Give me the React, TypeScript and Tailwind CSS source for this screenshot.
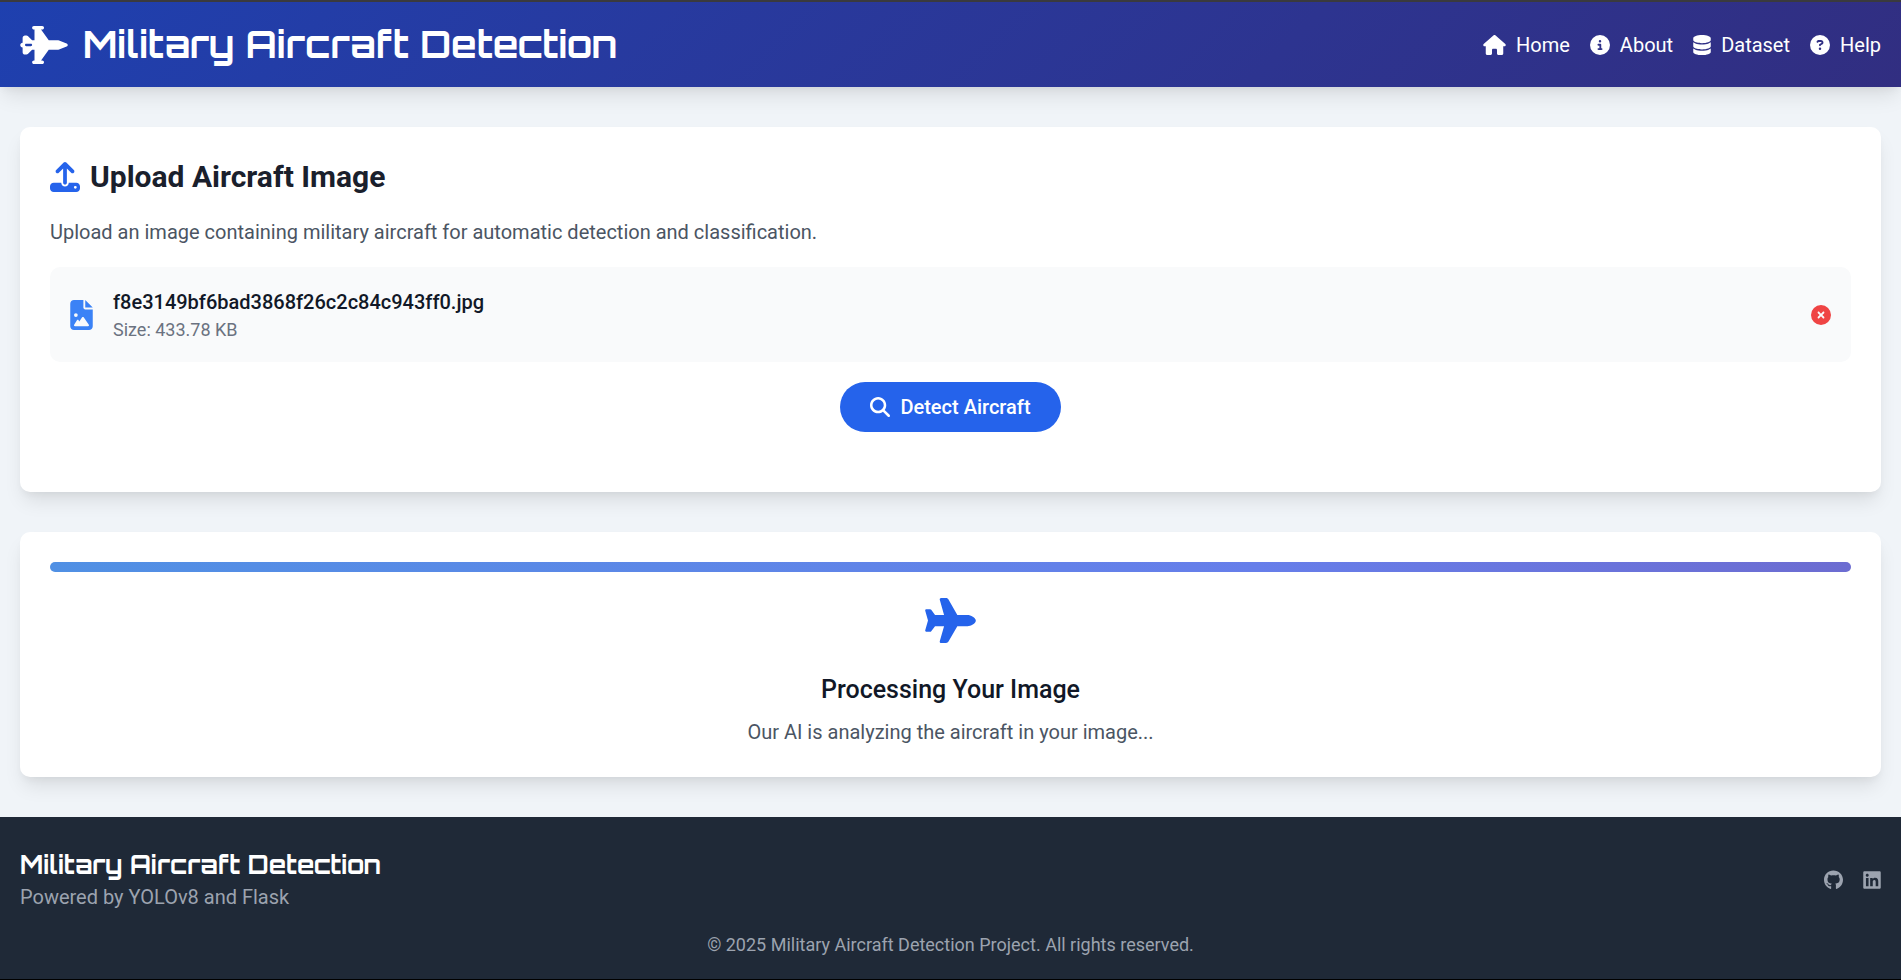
import type { ReactNode } from "react";
import {
  FaCircleInfo,
  FaCircleQuestion,
  FaCircleXmark,
  FaDatabase,
  FaFileImage,
  FaGithub,
  FaHouse,
  FaJetFighter,
  FaLinkedin,
  FaMagnifyingGlass,
  FaPlane,
  FaUpload,
} from "react-icons/fa6";

const navItems: { label: string; icon: ReactNode }[] = [
  { label: "Home", icon: <FaHouse className="h-5 w-[23px]" /> },
  { label: "About", icon: <FaCircleInfo className="size-5" /> },
  { label: "Dataset", icon: <FaDatabase className="h-5 w-[18px]" /> },
  { label: "Help", icon: <FaCircleQuestion className="size-5" /> },
];

function Header() {
  return (
    <header className="flex items-center justify-between border-t-2 border-[#3a3a3e] bg-linear-135 from-[#1e40af] to-[#312e81] px-5 py-5 text-white shadow-[0_12px_20px_-4px_rgba(0,0,0,0.1),0_5px_8px_-3px_rgba(0,0,0,0.05)]">
      <div className="flex items-center gap-[15px]">
        <FaJetFighter className="h-[38px] w-12" />
        <h1 className="font-['Orbitron','Inter',sans-serif] text-[37px] leading-[45px] font-bold">
          Military Aircraft Detection
        </h1>
      </div>
      <nav className="flex gap-5">
        {navItems.map((item) => (
          <a key={item.label} href="#" className="flex items-center gap-2.5">
            {item.icon}
            {item.label}
          </a>
        ))}
      </nav>
    </header>
  );
}

function Card({ children }: { children: ReactNode }) {
  return (
    <section className="rounded-[10px] bg-white p-[30px] shadow-[0_12px_20px_-4px_rgba(0,0,0,0.1),0_5px_8px_-3px_rgba(0,0,0,0.05)]">
      {children}
    </section>
  );
}

function UploadCard() {
  return (
    <Card>
      <h2 className="mb-5 flex items-center gap-2.5 text-[30px] leading-10 font-bold text-[#1a202c]">
        <FaUpload className="size-[30px] text-[#2563eb]" />
        Upload Aircraft Image
      </h2>
      <p className="mb-5 text-[#4b5563]">
        Upload an image containing military aircraft for automatic detection and classification.
      </p>
      <div className="mb-5 flex items-center rounded-[10px] bg-[#f9fafb] p-5">
        <FaFileImage className="mr-5 h-[30px] w-[23px] text-[#3b82f6]" />
        <div className="flex-1">
          <p className="font-medium text-[#111827]">f8e3149bf6bad3868f26c2c84c943ff0.jpg</p>
          <p className="text-[18px] leading-[25px] text-[#6b7280]">Size: 433.78 KB</p>
        </div>
        <button type="button" aria-label="Remove file" className="text-[#ef4444]">
          <FaCircleXmark className="size-5" />
        </button>
      </div>
      <div className="mb-[30px] flex justify-center">
        <button
          type="button"
          className="flex items-center gap-2.5 rounded-full bg-[#2563eb] px-[30px] py-2.5 font-medium text-white"
        >
          <FaMagnifyingGlass className="size-5" />
          Detect Aircraft
        </button>
      </div>
    </Card>
  );
}

function ProcessingCard() {
  return (
    <Card>
      <div
        role="progressbar"
        aria-label="Detection progress"
        className="mb-5 h-2.5 rounded-full bg-linear-to-r from-[#5090e4] via-[#667eea] via-67% to-[#6c6cd1]"
      />
      <div className="flex flex-col items-center text-center">
        <div className="mb-6 flex h-14 items-center">
          <FaPlane className="h-[45px] w-[51px] text-[#2563eb]" />
        </div>
        <h3 className="mb-2.5 text-[25px] leading-[35px] font-medium text-[#111827]">
          Processing Your Image
        </h3>
        <p className="text-[#4b5563]">Our AI is analyzing the aircraft in your image...</p>
      </div>
    </Card>
  );
}

function Footer() {
  return (
    <footer className="border-b border-black bg-[#1f2937] px-5 pt-[30px] pb-[22px] text-white">
      <div className="mb-5 flex items-center justify-between">
        <div>
          <h3 className="font-['Orbitron','Inter',sans-serif] text-[25px] leading-[35px] font-bold">
            Military Aircraft Detection
          </h3>
          <p className="text-[#9ca3af]">Powered by YOLOv8 and Flask</p>
        </div>
        <div className="flex gap-5 text-[#9ca3af]">
          <a href="#" aria-label="GitHub">
            <FaGithub className="h-5 w-[19px]" />
          </a>
          <a href="#" aria-label="LinkedIn">
            <FaLinkedin className="h-5 w-[18px]" />
          </a>
        </div>
      </div>
      <p className="text-center text-[18px] leading-[25px] text-[#9ca3af]">
        © 2025 Military Aircraft Detection Project. All rights reserved.
      </p>
    </footer>
  );
}

export default function App() {
  return (
    <div className="bg-[#f0f4f8] font-['Roboto',sans-serif] text-[20px] leading-[30px]">
      <Header />
      <main className="flex flex-col gap-10 px-5 py-10">
        <UploadCard />
        <ProcessingCard />
      </main>
      <Footer />
    </div>
  );
}
